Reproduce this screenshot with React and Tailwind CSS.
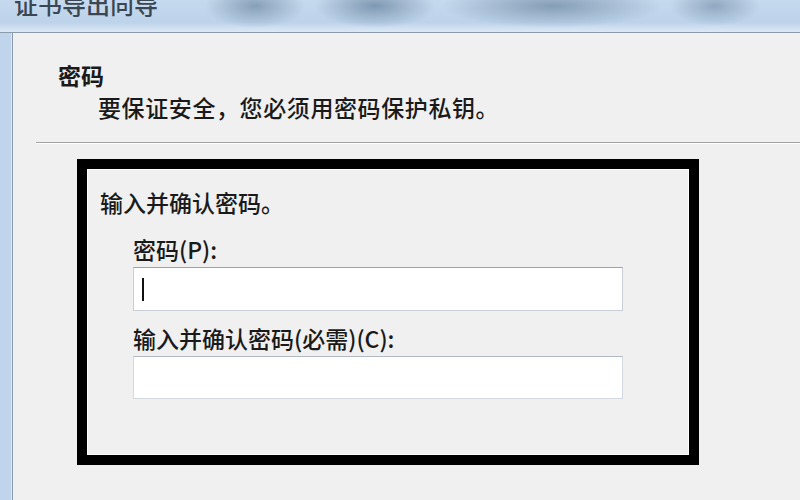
export default function App() {
  const font = { fontFamily: '"Noto Sans CJK SC", "Noto Sans", sans-serif' };

  return (
    <div className="w-[800px] h-[500px] overflow-hidden bg-[#f0f0f0] flex flex-col text-[#1a1a1a]" style={font}>
      {/* title bar, blurred aero glass */}
      <div className="h-[33px] shrink-0 overflow-hidden border-b border-[#8b9bab] bg-[radial-gradient(ellipse_50px_22px_at_255px_6px,#879fb8,transparent),radial-gradient(ellipse_60px_22px_at_375px_6px,#7f98b2,transparent),radial-gradient(ellipse_110px_22px_at_552px_6px,#859db6,transparent),radial-gradient(ellipse_45px_20px_at_715px_6px,#90a8c0,transparent),linear-gradient(to_bottom,#c6d9ee,#bcd3ea_70%,#dde9f5)]">
        <div className="-mt-[10px] pl-[14px] text-[24px] leading-[28px] font-medium text-[#3b4653]">证书导出向导</div>
      </div>

      <div className="flex flex-1">
        {/* left window frame */}
        <div className="w-[12px] shrink-0 bg-[#c0d5eb] border-r border-[#dbe7f4]"></div>

        {/* wizard page */}
        <div className="flex-1 border-l border-[#8b9bab] bg-[#f0f0f0]">
          <div className="pt-[26px] pl-[45px]">
            <div className="text-[23px] leading-[32px] font-bold">密码</div>
            <div className="pl-[40px] text-[23px] leading-[32px] tracking-[0.6px] font-medium">
              要保证安全，您必须用密码保护私钥。
            </div>
          </div>

          <div className="mt-[19px] ml-[23px] border-t border-[#a3a3a3] border-b border-b-white"></div>

          <div className="mt-[15px] ml-[64px] w-[622px] h-[306px] border-[10px] border-black bg-[#f0f0f0] shadow-[inset_0_0_0_1px_#ffffff]">
            <div className="pt-[17px] pl-[13px] font-medium">
              <div className="text-[23px] leading-[32px]">输入并确认密码。</div>

              <div className="pl-[33px]">
                <div className="mt-[15px] text-[23px] leading-[32px]">密码(P):</div>
                <div className="mt-[2px] w-[490px] h-[44px] bg-white border border-[#c8cfd8] border-t-[#9aa3ad] flex items-center">
                  <span className="ml-[8px] w-[2px] h-[23px] bg-[#111111]"></span>
                </div>

                <div className="mt-[11px] text-[23px] leading-[32px]">输入并确认密码(必需)(C):</div>
                <div className="mt-[2px] w-[490px] h-[43px] bg-white border border-[#d3d9e0] border-t-[#b2b9c2]"></div>
              </div>
            </div>
          </div>
        </div>
      </div>
    </div>
  );
}
